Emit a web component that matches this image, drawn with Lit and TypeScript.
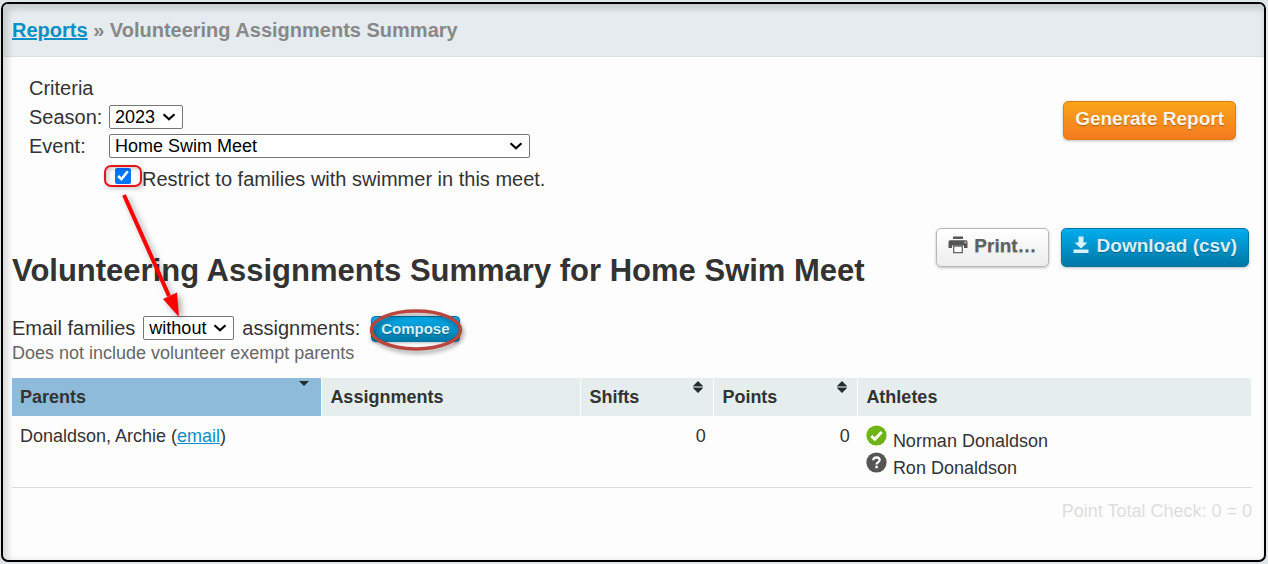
import { LitElement, html, css, svg } from "lit";
import { customElement, state } from "lit/decorators.js";

interface Athlete {
  name: string;
  signedUp: boolean;
}

interface ParentRow {
  parent: string;
  assignments: string;
  shifts: number;
  points: number;
  athletes: Athlete[];
}

const chevron = html`<svg class="chevron" viewBox="0 0 14 8" aria-hidden="true">
  <path d="M1.5 1.2 L7 6.2 L12.5 1.2" fill="none" stroke="#000" stroke-width="2.2" />
</svg>`;

const sortBoth = html`<svg class="sort" viewBox="0 0 10 12" aria-hidden="true">
  <path d="M5 0 L10 5 H0 Z M0 7 H10 L5 12 Z" fill="#222b2e" />
  <path d="M0 5 H10 V7 H0 Z" fill="#222b2e" opacity="0.45" />
</svg>`;

const sortDown = html`<svg class="sort" viewBox="0 0 10 12" aria-hidden="true">
  <path d="M0 3 H10 L5 8 Z" fill="#222b2e" />
</svg>`;

const printer = html`<svg class="icon" viewBox="0 0 20 18" aria-hidden="true">
  <path d="M5 0.5 H15 V3 H5 Z M2 4.2 H18 Q19.5 4.2 19.5 5.7 V12 H16 V9.5 H4 V12 H0.5 V5.7 Q0.5 4.2 2 4.2 Z" fill="#555" />
  <path d="M5.7 10 H14.3 V16.6 H5.7 Z" fill="#fff" stroke="#666" stroke-width="1.3" />
  <rect x="16.6" y="5.6" width="1.6" height="1.6" fill="#ddd" />
</svg>`;

const download = html`<svg class="icon narrow" viewBox="0 0 16 18" aria-hidden="true">
  <path d="M5.5 0.5 H10.5 V6.5 H14.5 L8 12.5 L1.5 6.5 H5.5 Z M0.5 13.5 H15.5 V17 H0.5 Z" fill="#d9f1fb" />
</svg>`;

const yesMark = svg`<circle cx="11" cy="11" r="10.6" fill="#6fb417" />
  <path d="M5.6 11.6 L9.3 15 L16.4 7.4" fill="none" stroke="#fff" stroke-width="3" />`;

const unknownMark = svg`<circle cx="11" cy="11" r="10.6" fill="#555" />
  <path d="M7.6 8.6 Q7.8 5.6 11.1 5.6 Q14.3 5.7 14.3 8.4 Q14.2 9.8 12.6 10.7 Q11.1 11.5 11.1 13.2" fill="none" stroke="#fff" stroke-width="2.4" />
  <rect x="9.8" y="14.4" width="2.6" height="2.6" fill="#fff" />`;

@customElement("app-root")
export class AppRoot extends LitElement {
  @state() private restrict = true;

  private rows: ParentRow[] = [
    {
      parent: "Donaldson, Archie",
      assignments: "",
      shifts: 0,
      points: 0,
      athletes: [
        { name: "Norman Donaldson", signedUp: true },
        { name: "Ron Donaldson", signedUp: false },
      ],
    },
  ];

  static styles = css`
    :host {
      display: flex;
      box-sizing: border-box;
      min-height: 100vh;
      padding: 2px 2px 2px 1px;
      background: #dfe6e9;
      color: #333;
      font: 20px/28px "Liberation Sans", Arial, sans-serif;
    }
    *,
    *::after {
      box-sizing: border-box;
    }
    .panel {
      position: relative;
      flex: 1;
      min-width: 0;
      border: 2px solid #000;
      border-radius: 7px;
      background: #fdfdfd;
      overflow: hidden;
    }
    .panel::after {
      content: "";
      position: absolute;
      inset: 0;
      border-radius: 5px;
      box-shadow: inset 3px 3px 6px 2px rgba(0, 0, 0, 0.14);
      pointer-events: none;
    }
    a {
      color: #0b8fc5;
      text-decoration: underline;
    }
    .crumbs {
      padding: 12px 9px 12px;
      border-bottom: 1px solid #d9e1e5;
      background: #e5ebee;
      color: #888;
      font-weight: bold;
    }
    .criteria {
      display: flex;
      justify-content: space-between;
      align-items: flex-start;
      padding: 17px 28px 0 26px;
    }
    .fields {
      display: grid;
      grid-template-columns: 80px auto;
      align-items: center;
      row-gap: 1px;
    }
    .legend {
      grid-column: 1 / 3;
    }
    .cell {
      display: flex;
    }
    .picker {
      position: relative;
      display: inline-flex;
      align-items: center;
    }
    .picker.wide {
      width: 421px;
    }
    select {
      appearance: none;
      width: 100%;
      height: 24px;
      margin: 0;
      padding: 0 26px 0 5px;
      border: 1px solid #767676;
      border-radius: 2px;
      background: #fff;
      color: #000;
      font: 18px/22px "Liberation Sans", Arial, sans-serif;
    }
    .chevron {
      position: absolute;
      right: 7px;
      width: 14px;
      height: 8px;
      pointer-events: none;
    }
    .restrict {
      grid-column: 2;
      display: flex;
      align-items: center;
      padding: 4px 0 0 6px;
    }
    .tick {
      position: relative;
      display: flex;
      width: 27px;
      padding-bottom: 6px;
    }
    .tick input {
      width: 16px;
      height: 16px;
      margin: 0;
    }
    .tick::after {
      content: "";
      position: absolute;
      left: -11px;
      top: -3px;
      width: 38px;
      height: 22px;
      border: 2px solid #e8141c;
      border-radius: 7px;
      box-shadow: 2px 2px 4px rgba(0, 0, 0, 0.2), inset 2px 2px 4px rgba(0, 0, 0, 0.2);
      pointer-events: none;
    }
    .arrow {
      position: absolute;
      left: 0;
      top: 20px;
      width: 80px;
      height: 140px;
      z-index: 1;
      pointer-events: none;
      filter: drop-shadow(3px 3px 3px rgba(0, 0, 0, 0.35));
    }
    button {
      display: inline-flex;
      align-items: center;
      height: 39px;
      margin: 0;
      padding: 0 11px 3px;
      border: 1px solid;
      border-radius: 5px;
      font: bold 19px/24px "Liberation Sans", Arial, sans-serif;
      box-shadow: 0 1px 3px rgba(0, 0, 0, 0.25);
      white-space: nowrap;
    }
    .orange {
      margin-top: 27px;
      border-color: #dd7d12;
      background: linear-gradient(#faa51a, #f47a20);
      color: #fef4e9;
      text-shadow: 0 1px 1px rgba(0, 0, 0, 0.3);
    }
    .white {
      border-color: #b7b7b7;
      background: linear-gradient(#fff, #ededed);
      color: #606060;
      text-shadow: 0 1px 1px rgba(0, 0, 0, 0.3);
    }
    .blue {
      border-color: #0076a3;
      background: linear-gradient(#00adee, #0078a5);
      color: #d9eef7;
      text-shadow: 0 1px 1px rgba(0, 0, 0, 0.3);
    }
    .icon {
      width: 20px;
      height: 18px;
      margin: 0 6px 2px 0;
    }
    .icon.narrow {
      width: 16px;
      margin-right: 8px;
    }
    .results {
      padding: 35px 12px 0 9px;
    }
    .title-bar {
      display: flex;
      justify-content: space-between;
      align-items: flex-start;
      padding-right: 3px;
    }
    h1 {
      margin: 24px 0 0;
      font-size: 31px;
      line-height: 38px;
    }
    .actions {
      display: flex;
      gap: 12px;
    }
    .mailer {
      display: flex;
      align-items: center;
      gap: 8px;
      margin-top: 24px;
    }
    .ringed {
      position: relative;
      display: flex;
      align-self: flex-end;
      margin-left: 3px;
    }
    .ringed button {
      height: 26px;
      padding: 0 9px 1px;
      border-radius: 4px;
      font-size: 15px;
      line-height: 20px;
    }
    .ring {
      position: absolute;
      left: -5px;
      top: -10px;
      width: 100px;
      height: 50px;
      pointer-events: none;
      filter: drop-shadow(2px 3px 2px rgba(0, 0, 0, 0.35));
    }
    .note {
      margin: 0 0 14px;
      color: #666;
      font-size: 18px;
      line-height: 22px;
    }
    table {
      width: 100%;
      border-collapse: collapse;
      table-layout: fixed;
      font-size: 18px;
      line-height: 24px;
    }
    th {
      position: relative;
      height: 38px;
      padding: 0 8px;
      border-right: 1px solid #fdfdfd;
      background: #e6eeed;
      text-align: left;
    }
    th.sorted {
      background: #8dbbd9;
    }
    .parents {
      width: 25%;
    }
    .assignments {
      width: 259px;
    }
    .shifts {
      width: 133px;
    }
    .points {
      width: 144px;
    }
    .sort {
      position: absolute;
      right: 10px;
      top: 3px;
      width: 10px;
      height: 12px;
    }
    .sorted .sort {
      right: 12px;
      top: 0;
    }
    td {
      padding: 8px;
      border-bottom: 1px solid #ddd;
      vertical-align: top;
    }
    td.number {
      text-align: right;
    }
    ul {
      margin: 0;
      padding: 0 0 1px;
      list-style: none;
    }
    li {
      display: flex;
      gap: 6px;
      height: 27px;
    }
    li span {
      padding-top: 5px;
    }
    .mark {
      width: 21px;
      height: 21px;
      margin-top: 1px;
    }
    .total {
      margin: 12px 0 0;
      color: #ddd;
      font-size: 18px;
      line-height: 22px;
      text-align: right;
    }
  `;

  private onRestrict(e: Event) {
    this.restrict = (e.target as HTMLInputElement).checked;
  }

  private renderRow(row: ParentRow) {
    return html`<tr>
      <td>${row.parent} (<a href="#email">email</a>)</td>
      <td>${row.assignments}</td>
      <td class="number">${row.shifts}</td>
      <td class="number">${row.points}</td>
      <td>
        <ul>
          ${row.athletes.map(
            (a) => html`<li>
              <svg class="mark" viewBox="0 0 22 22" aria-hidden="true">${a.signedUp ? yesMark : unknownMark}</svg>
              <span>${a.name}</span>
            </li>`
          )}
        </ul>
      </td>
    </tr>`;
  }

  render() {
    return html`<main class="panel">
      <nav class="crumbs"><a href="#reports">Reports</a> » Volunteering Assignments Summary</nav>

      <section class="criteria">
        <div class="fields">
          <div class="legend">Criteria</div>
          <label for="season">Season:</label>
          <div class="cell"><span class="picker"><select id="season"><option>2023</option></select>${chevron}</span></div>
          <label for="event">Event:</label>
          <div class="cell"><span class="picker wide"><select id="event"><option>Home Swim Meet</option></select>${chevron}</span></div>
          <div class="restrict">
            <span class="tick">
              <input id="restrict" type="checkbox" .checked=${this.restrict} @change=${this.onRestrict} />
              <svg class="arrow" viewBox="0 0 80 140" aria-hidden="true">
                <path d="M9 7 L54 108" stroke="#f00" stroke-width="4" />
                <path d="M64 129 L48 111 L62 104.500 Z" fill="#f00" />
              </svg>
            </span>
            <label for="restrict">Restrict to families with swimmer in this meet.</label>
          </div>
        </div>
        <button class="orange" type="button">Generate Report</button>
      </section>

      <section class="results">
        <div class="title-bar">
          <h1>Volunteering Assignments Summary for Home Swim Meet</h1>
          <div class="actions">
            <button class="white" type="button">${printer}Print…</button>
            <button class="blue" type="button">${download}Download (csv)</button>
          </div>
        </div>

        <div class="mailer">
          <label for="which">Email families</label>
          <span class="picker"><select id="which"><option>without</option></select>${chevron}</span>
          <span>assignments:</span>
          <span class="ringed">
            <button class="blue" type="button">Compose</button>
            <svg class="ring" viewBox="0 0 100 50" aria-hidden="true">
              <ellipse cx="50" cy="24" rx="44.500" ry="19" fill="none" stroke="#b9453f" stroke-width="3.500" />
            </svg>
          </span>
        </div>
        <p class="note">Does not include volunteer exempt parents</p>

        <table>
          <thead>
            <tr>
              <th class="parents sorted" scope="col" aria-sort="descending">Parents${sortDown}</th>
              <th class="assignments" scope="col">Assignments</th>
              <th class="shifts" scope="col">Shifts${sortBoth}</th>
              <th class="points" scope="col">Points${sortBoth}</th>
              <th scope="col">Athletes</th>
            </tr>
          </thead>
          <tbody>
            ${this.rows.map((row) => this.renderRow(row))}
          </tbody>
        </table>
        <p class="total">Point Total Check: 0 = 0</p>
      </section>
    </main>`;
  }
}
